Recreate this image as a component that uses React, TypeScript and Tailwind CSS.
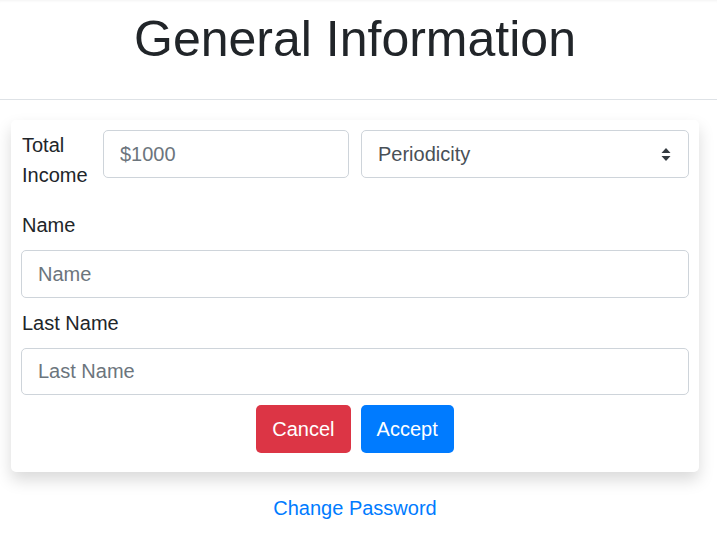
import React from "react";

export default function App() {
  const font = { fontFamily: '"Liberation Sans", Arial, sans-serif' };
  return (
    <div className="min-h-[537px] bg-white text-[#212529]" style={font}>
      <header className="h-[100px] border-b border-[#dee2e6] shadow-[inset_0_3px_3px_-2px_rgba(0,0,0,0.05)] pt-[9px] pr-[7px]">
        <h1 className="text-center text-[50px] leading-[60px] font-normal">General Information</h1>
      </header>
      <main className="pl-[11px] pr-[18px] pt-[20px]">
        <div className="bg-white rounded-[5px] shadow-[0_8px_16px_rgba(0,0,0,0.15)] px-[10px] pt-[10px] pb-[19px]">
          <div className="grid grid-cols-[66px_246px_328px] gap-x-[16px]">
            <label className="text-[20px] leading-[30px] pl-[1px]">Total Income</label>
            <input
              className="h-[48px] w-[246px] rounded-[5px] border border-[#ced4da] px-[16px] text-[20px] placeholder:text-[#6c757d] outline-none"
              placeholder="$1000"
            />
            <div className="ml-[-4px] relative h-[48px] w-[328px] rounded-[5px] border border-[#ced4da] flex items-center px-[16px] text-[20px] text-[#495057]">
              <span>Periodicity</span>
              <svg className="absolute right-[17px] top-[17px]" width="10" height="13" viewBox="0 0 10 13">
                <path d="M5 0 L9.5 5 L0.5 5 Z" fill="#343a40" />
                <path d="M5 13 L9.5 8 L0.5 8 Z" fill="#343a40" />
              </svg>
            </div>
          </div>
          <div className="mt-[20px] flex flex-col">
            <label className="text-[20px] leading-[30px] pl-[1px]">Name</label>
            <input
              className="mt-[10px] h-[48px] w-full rounded-[5px] border border-[#ced4da] px-[16px] text-[20px] placeholder:text-[#6c757d] outline-none"
              placeholder="Name"
            />
            <label className="mt-[10px] text-[20px] leading-[30px] pl-[1px]">Last Name</label>
            <input
              className="mt-[10px] h-[47px] w-full rounded-[5px] border border-[#ced4da] px-[16px] text-[20px] placeholder:text-[#6c757d] outline-none"
              placeholder="Last Name"
            />
          </div>
          <div className="mt-[10px] flex justify-center gap-[10px]">
            <button className="h-[48px] px-[16px] rounded-[5px] bg-[#dc3545] text-white text-[20px]">Cancel</button>
            <button className="h-[48px] px-[16px] rounded-[5px] bg-[#007bff] text-white text-[20px]">Accept</button>
          </div>
        </div>
        <div className="mt-[21px] text-center">
          <a href="#" className="text-[#007bff] text-[20px] leading-[30px]">Change Password</a>
        </div>
      </main>
    </div>
  );
}
